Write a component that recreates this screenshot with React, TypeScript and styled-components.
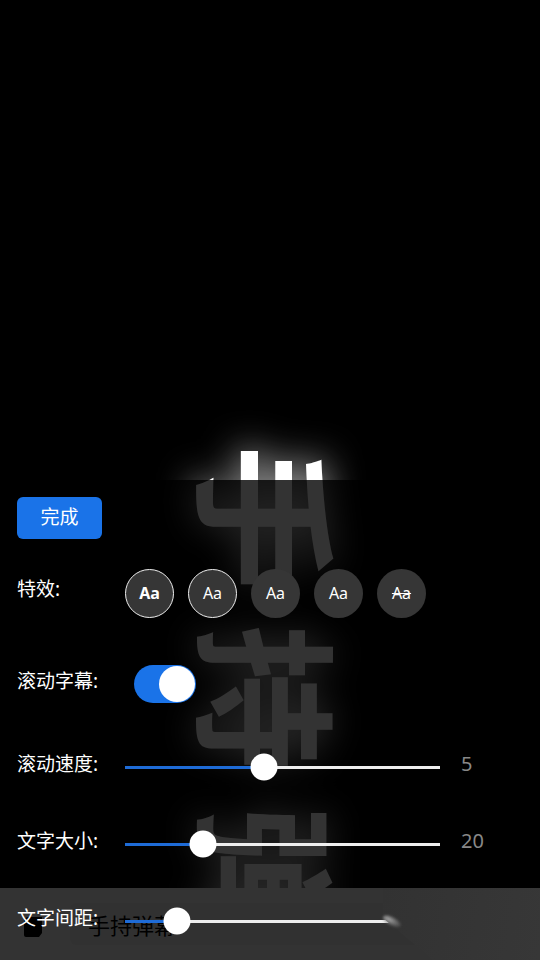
import styled, { createGlobalStyle } from "styled-components";

const GlobalStyle = createGlobalStyle`
  html, body {
    margin: 0;
    padding: 0;
    background: #000;
  }
  body {
    font-family: "Noto Sans", "Noto Sans CJK SC", sans-serif;
  }
`;

const Stage = styled.div`
  position: relative;
  width: 540px;
  height: 960px;
  overflow: hidden;
  background: #000;
`;

const Danmaku = styled.div`
  position: absolute;
  top: 445px;
  left: 192px;
  width: 160px;
  writing-mode: vertical-rl;
  text-orientation: sideways;
  font-family: "Noto Sans CJK SC", sans-serif;
  font-size: 145px;
  font-weight: 700;
  line-height: 160px;
  letter-spacing: 35px;
  white-space: nowrap;
  color: #fff;
  text-shadow: 0 0 36px rgba(255, 255, 255, 0.9);
`;

const InputBar = styled.div`
  position: absolute;
  left: 0;
  right: 0;
  bottom: 0;
  height: 72px;
  display: flex;
  align-items: center;
  gap: 28px;
  padding: 0 75px 0 24px;
  box-sizing: border-box;
  background: #fff;
`;

const BarIcon = styled.svg`
  flex: none;
  width: 18px;
  height: 20px;
  margin-top: 6px;
`;

const InputBox = styled.div`
  flex: 1;
  height: 42px;
  padding-left: 18px;
  display: flex;
  align-items: center;
  border-radius: 6px;
  background: #f4f4f4;
  color: #000;
  font-size: 22px;
  font-family: "Noto Sans CJK SC", sans-serif;
`;

const Panel = styled.div`
  position: absolute;
  inset: 480px 0 0 0;
  display: flex;
  flex-direction: column;
  align-items: flex-start;
  padding: 17px 0 0 17px;
  box-sizing: border-box;
  background: rgba(0, 0, 0, 0.8);
  color: #fff;
`;

const DoneButton = styled.button`
  width: 85px;
  height: 42px;
  margin-bottom: 30px;
  padding: 0 0 5px;
  border: none;
  border-radius: 6px;
  background: #1a73e8;
  color: #fff;
  font-family: inherit;
  font-size: 19px;
`;

const Row = styled.div<{ $height: number; $gap?: number }>`
  display: flex;
  align-items: center;
  height: ${(p) => p.$height}px;
  margin-bottom: ${(p) => p.$gap ?? 47}px;
`;

const Label = styled.div<{ $lift?: number }>`
  flex: none;
  width: 108px;
  padding-bottom: ${(p) => p.$lift ?? 6}px;
  font-size: 19px;
  line-height: 24px;
  white-space: nowrap;
`;

const Effects = styled.div`
  display: flex;
  gap: 14px;
`;

const EffectButton = styled.div<{ $active?: boolean; $bold?: boolean; $strike?: boolean }>`
  width: 49px;
  height: 49px;
  box-sizing: border-box;
  display: flex;
  align-items: center;
  justify-content: center;
  padding-bottom: 1px;
  border-radius: 50%;
  border: 1px solid ${(p) => (p.$active ? "#eee" : "transparent")};
  background: #363636;
  font-size: 16px;
  font-weight: ${(p) => (p.$bold ? 700 : 400)};
  text-decoration: ${(p) => (p.$strike ? "line-through" : "none")};
`;

const Switch = styled.div`
  position: relative;
  width: 62px;
  height: 38px;
  margin-left: 9px;
  border-radius: 19px;
  background: #1a73e8;
`;

const SwitchKnob = styled.div`
  position: absolute;
  top: 1px;
  right: 1px;
  width: 36px;
  height: 36px;
  border-radius: 50%;
  background: #fff;
`;

const Track = styled.div`
  position: relative;
  flex: none;
  width: 315px;
  height: 3px;
  background: #eee;
`;

const Fill = styled.div`
  height: 100%;
  background: #1e6bd6;
`;

const Thumb = styled.div`
  position: absolute;
  top: 50%;
  width: 27px;
  height: 27px;
  border-radius: 50%;
  background: #fff;
  transform: translate(-50%, -50%);
`;

const Value = styled.div`
  margin-left: 21px;
  padding-bottom: 7px;
  color: #888;
  font-size: 20px;
  line-height: 24px;
`;

const BarCorner = styled.div`
  position: absolute;
  left: 383px;
  top: 888px;
  right: 0;
  bottom: 0;
  background: linear-gradient(100deg, #323232, #373737);
  clip-path: polygon(0 0, 100% 0, 100% 100%, 50px 100%, 0 30px);
`;

const Smudge = styled.div`
  position: absolute;
  left: 382px;
  top: 917px;
  width: 20px;
  height: 9px;
  border-radius: 50%;
  background: radial-gradient(ellipse at 30% 45%, #a8a8a8, rgba(90, 90, 90, 0.35) 70%, transparent);
  filter: blur(1px);
  transform: rotate(28deg);
`;

interface SliderRowProps {
  label: string;
  position: number;
  value?: string;
  last?: boolean;
}

function SliderRow({ label, position, value, last }: SliderRowProps) {
  return (
    <Row $height={30} $gap={last ? 0 : 47}>
      <Label>{label}</Label>
      <Track>
        <Fill style={{ width: position }} />
        <Thumb style={{ left: position }} />
      </Track>
      {value && <Value>{value}</Value>}
    </Row>
  );
}

export default function App() {
  return (
    <Stage>
      <GlobalStyle />
      <Danmaku>手持弹幕</Danmaku>
      <InputBar>
        <BarIcon viewBox="0 0 18 20">
          <path d="M3 0h15v16l-3 4H2a2 2 0 0 1-2-2V3z" fill="#000" />
        </BarIcon>
        <InputBox>手持弹幕</InputBox>
      </InputBar>
      <Panel>
        <DoneButton>完成</DoneButton>
        <Row $height={49}>
          <Label $lift={10}>特效:</Label>
          <Effects>
            <EffectButton $active $bold>Aa</EffectButton>
            <EffectButton $active>Aa</EffectButton>
            <EffectButton>Aa</EffectButton>
            <EffectButton>Aa</EffectButton>
            <EffectButton $strike>Aa</EffectButton>
          </Effects>
        </Row>
        <Row $height={38} $gap={49}>
          <Label>滚动字幕:</Label>
          <Switch>
            <SwitchKnob />
          </Switch>
        </Row>
        <SliderRow label="滚动速度:" position={139} value="5" />
        <SliderRow label="文字大小:" position={78} value="20" />
        <SliderRow label="文字间距:" position={52} last />
      </Panel>
      <BarCorner />
      <Smudge />
    </Stage>
  );
}
